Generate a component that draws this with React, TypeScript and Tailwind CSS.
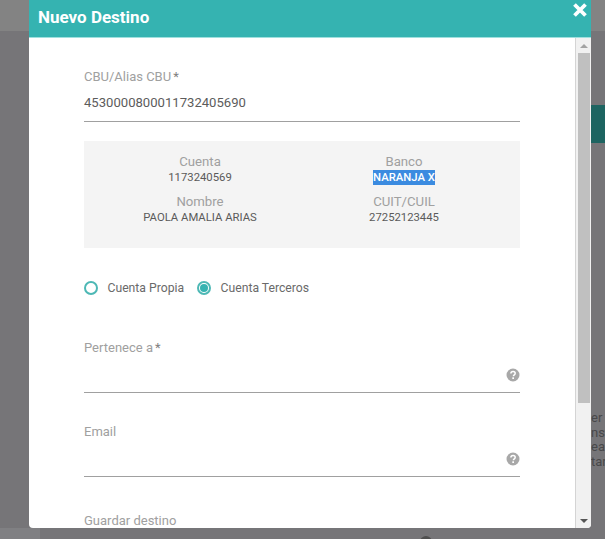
const font = "font-['Roboto',sans-serif]";

function HelpIcon() {
  return (
    <svg className="absolute right-0 top-[-3px]" width="14" height="14" viewBox="0 0 14 14">
      <circle cx="7" cy="7" r="6.5" fill="#a8a8a8" />
      <path d="M4.9 5.4c0-1.300 1-2 2.200-2 1.200 0 2.100.7 2.100 1.800 0 1.700-1.800 1.500-1.800 3" fill="none" stroke="#fff" strokeWidth="1.500" />
      <rect x="6.300" y="9.300" width="1.700" height="1.700" fill="#fff" />
    </svg>
  );
}

function InfoCell({ label, value, selected }: { label: string; value: string; selected?: boolean }) {
  return (
    <div className="flex flex-col items-center h-[39px]">
      <span className="text-[13.200px] leading-[16px] text-[#a0a0a0]">{label}</span>
      <span className={selected ? "text-[11.300px] leading-[15px] font-medium text-white bg-[#3b8be0]" : "text-[11.300px] leading-[15px] text-[#5a5a5a]"}>
        {value}
      </span>
    </div>
  );
}

function Radio({ checked, label }: { checked?: boolean; label: string }) {
  return (
    <div className="flex items-center">
      <span className="w-[14px] h-[14px] rounded-full border-2 border-[#4db8b5] flex items-center justify-center bg-white">
        {checked && <span className="w-[8px] h-[8px] rounded-full bg-[#35b3b1]" />}
      </span>
      <span className="ml-[9.500px] text-[12.200px] leading-[16px] text-[#6a6a6a]">{label}</span>
    </div>
  );
}

function TextField({ label, required }: { label: string; required?: boolean }) {
  return (
    <div>
      <div className="text-[13px] leading-[16px] text-[#a0a0a0]">
        {label}
        {required && <span className="ml-[2px] text-[#808080]">*</span>}
      </div>
      <div className="relative mt-[15px] h-[22px] border-b border-[#a0a0a0]">
        <HelpIcon />
      </div>
    </div>
  );
}

export default function App() {
  return (
    <div className={`relative w-[605px] h-[539px] overflow-hidden bg-[#767578] ${font}`}>
      {/* page behind the overlay */}
      <div className="h-[31px] bg-[#838383]" />
      <div className="absolute right-0 top-[105px] w-[14px] h-[38px] bg-[#1d6461]" />
      <div className="absolute left-[591px] top-[411px] text-[13px] leading-[14.500px] text-[#48484a] whitespace-nowrap">
        <div>er c</div>
        <div>nst</div>
        <div>eal</div>
        <div>tar</div>
      </div>
      <div className="absolute left-0 bottom-0 w-[40px] h-[11px] bg-[#808083]" />
      <div className="absolute left-[420px] top-[536px] w-[12px] h-[12px] rounded-full bg-[#4f4f4f]" />

      {/* modal */}
      <div className="absolute left-[29px] top-0 w-[562px] h-[528px] flex flex-col rounded-b-[4px] overflow-hidden bg-white">
        <div className="relative h-[38px] shrink-0 bg-[#35b3b1] border-b border-[#9fe0de] flex items-center pl-[9px] pb-[1px]">
          <span className="text-[17px] font-bold text-white">Nuevo Destino</span>
          <span className="absolute right-[3px] top-[2px]">
            <svg width="16" height="16" viewBox="0 0 16 16">
              <path d="M2.500 2.500L13.500 13.500M13.500 2.500L2.500 13.500" stroke="#fff" strokeWidth="3.800" />
            </svg>
          </span>
        </div>

        <div className="flex flex-1 min-h-0">
          {/* form */}
          <div className="flex-1 min-w-0 overflow-hidden px-[55px] pt-[31px]">
            <div className="text-[13px] leading-[16px] text-[#a0a0a0]">
              CBU/Alias CBU<span className="ml-[2px] text-[#808080]">*</span>
            </div>
            <div className="mt-[10px] h-[27px] border-b border-[#a0a0a0] text-[13.100px] leading-[16px] text-[#5c5c5c]">
              4530000800011732405690
            </div>

            <div className="mt-[19px] h-[107px] bg-[#f4f4f4] grid grid-cols-2 pt-[13px] px-[14px] gap-y-[1px] content-start">
              <InfoCell label="Cuenta" value="1173240569" />
              <InfoCell label="Banco" value="NARANJA X" selected />
              <InfoCell label="Nombre" value="PAOLA AMALIA ARIAS" />
              <InfoCell label="CUIT/CUIL" value="27252123445" />
            </div>

            <div className="mt-[32px] flex gap-[13px]">
              <Radio label="Cuenta Propia" />
              <Radio checked label="Cuenta Terceros" />
            </div>

            <div className="mt-[44px]">
              <TextField label="Pertenece a" required />
            </div>
            <div className="mt-[31px]">
              <TextField label="Email" />
            </div>
            <div className="mt-[36px] text-[13px] leading-[16px] text-[#a0a0a0]">Guardar destino</div>
          </div>

          {/* scrollbar */}
          <div className="w-[16px] shrink-0 bg-[#f1f1f1] border-l border-[#d4d4d4] flex flex-col items-center">
            <div className="h-[15px] flex items-center justify-center shrink-0">
              <span className="w-0 h-0 border-x-[4px] border-x-transparent border-b-[4px] border-b-[#a3a3a3]" />
            </div>
            <div className="w-[12px] h-[350px] bg-[#c0c0c0]" />
            <div className="flex-1" />
            <div className="h-[15px] flex items-center justify-center shrink-0">
              <span className="w-0 h-0 border-x-[4px] border-x-transparent border-t-[4px] border-t-[#555555]" />
            </div>
          </div>
        </div>
      </div>
    </div>
  );
}
